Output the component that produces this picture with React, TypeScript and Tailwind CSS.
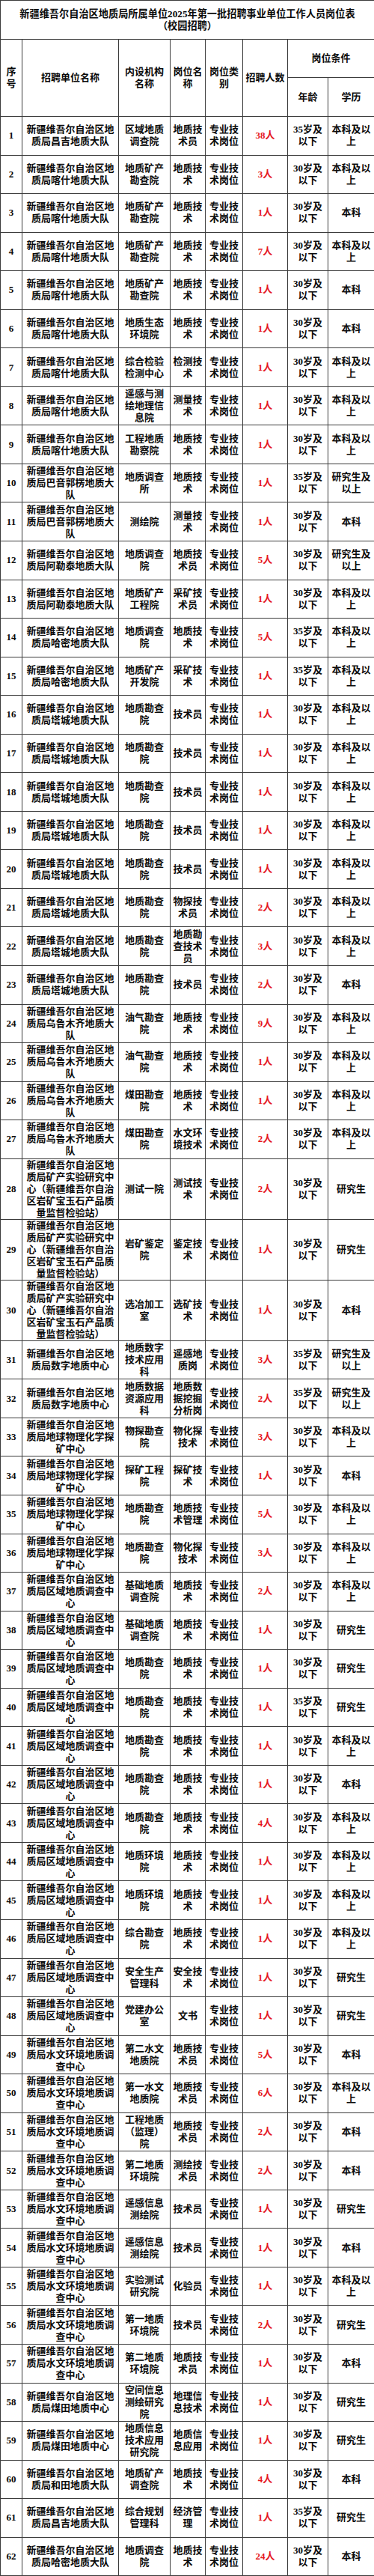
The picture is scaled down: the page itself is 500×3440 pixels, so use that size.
const A = "新疆维吾尔自治区地质局昌吉地质大队";
const B = "新疆维吾尔自治区地质局喀什地质大队";
const C = "新疆维吾尔自治区地质局巴音郭楞地质大队";
const D = "新疆维吾尔自治区地质局阿勒泰地质大队";
const E = "新疆维吾尔自治区地质局哈密地质大队";
const F = "新疆维吾尔自治区地质局塔城地质大队";
const G = "新疆维吾尔自治区地质局乌鲁木齐地质大队";
const H = "新疆维吾尔自治区地质局矿产实验研究中心（新疆维吾尔自治区岩矿宝玉石产品质量监督检验站）";
const I = "新疆维吾尔自治区地质局数字地质中心";
const J = "新疆维吾尔自治区地质局地球物理化学探矿中心";
const K = "新疆维吾尔自治区地质局区域地质调查中心";
const L = "新疆维吾尔自治区地质局水文环境地质调查中心";
const M = "新疆维吾尔自治区地质局煤田地质中心";
const N = "新疆维吾尔自治区地质局和田地质大队";

// unit, dept, post, count, age, education
const rows: [string, string, string, string, string, string][] = [
  [A, "区域地质调查院", "地质技术员", "38人", "35岁及以下", "本科及以上"],
  [B, "地质矿产勘查院", "地质技术", "3人", "30岁及以下", "本科及以上"],
  [B, "地质矿产勘查院", "地质技术", "1人", "30岁及以下", "本科"],
  [B, "地质矿产勘查院", "地质技术", "7人", "30岁及以下", "本科及以上"],
  [B, "地质矿产勘查院", "地质技术", "1人", "30岁及以下", "本科"],
  [B, "地质生态环境院", "地质技术", "1人", "30岁及以下", "本科"],
  [B, "综合检验检测中心", "检测技术", "1人", "30岁及以下", "本科及以上"],
  [B, "遥感与测绘地理信息院", "测量技术", "1人", "30岁及以下", "本科及以上"],
  [B, "工程地质勘察院", "地质技术", "1人", "30岁及以下", "本科及以上"],
  [C, "地质调查所", "地质技术", "1人", "35岁及以下", "研究生及以上"],
  [C, "测绘院", "测量技术", "1人", "30岁及以下", "本科"],
  [D, "地质调查院", "地质技术员", "5人", "30岁及以下", "研究生及以上"],
  [D, "地质矿产工程院", "采矿技术员", "1人", "30岁及以下", "本科及以上"],
  [E, "地质调查院", "地质技术", "5人", "35岁及以下", "本科及以上"],
  [E, "地质矿产开发院", "采矿技术", "1人", "35岁及以下", "本科及以上"],
  [F, "地质勘查院", "技术员", "1人", "30岁及以下", "本科及以上"],
  [F, "地质勘查院", "技术员", "1人", "30岁及以下", "本科及以上"],
  [F, "地质勘查院", "技术员", "1人", "30岁及以下", "本科及以上"],
  [F, "地质勘查院", "技术员", "1人", "30岁及以下", "本科及以上"],
  [F, "地质勘查院", "技术员", "1人", "30岁及以下", "本科及以上"],
  [F, "地质勘查院", "物探技术员", "2人", "30岁及以下", "本科及以上"],
  [F, "地质勘查院", "地质勘查技术员", "3人", "30岁及以下", "本科及以上"],
  [F, "地质勘查院", "技术员", "2人", "30岁及以下", "本科"],
  [G, "油气勘查院", "地质技术", "9人", "30岁及以下", "本科及以上"],
  [G, "油气勘查院", "地质技术", "1人", "30岁及以下", "本科及以上"],
  [G, "煤田勘查院", "地质技术", "1人", "30岁及以下", "本科及以上"],
  [G, "煤田勘查院", "水文环境技术", "2人", "30岁及以下", "本科及以上"],
  [H, "测试一院", "测试技术", "2人", "30岁及以下", "研究生"],
  [H, "岩矿鉴定院", "鉴定技术", "1人", "30岁及以下", "研究生"],
  [H, "选冶加工室", "选矿技术", "1人", "30岁及以下", "本科"],
  [I, "地质数字技术应用科", "遥感地质岗", "3人", "35岁及以下", "研究生及以上"],
  [I, "地质数据资源应用科", "地质数据挖掘分析岗", "2人", "35岁及以下", "研究生及以上"],
  [J, "物探勘查院", "物化探技术", "3人", "30岁及以下", "本科及以上"],
  [J, "探矿工程院", "探矿技术", "1人", "30岁及以下", "本科"],
  [J, "地质勘查院", "地质技术管理", "5人", "30岁及以下", "本科及以上"],
  [J, "地质勘查院", "物化探技术", "3人", "30岁及以下", "本科及以上"],
  [K, "基础地质调查院", "地质技术", "2人", "30岁及以下", "本科及以上"],
  [K, "基础地质调查院", "地质技术", "1人", "30岁及以下", "研究生"],
  [K, "地质勘查院", "地质技术", "1人", "30岁及以下", "研究生"],
  [K, "地质勘查院", "地质技术", "1人", "35岁及以下", "研究生"],
  [K, "地质勘查院", "地质技术", "1人", "30岁及以下", "本科及以上"],
  [K, "地质勘查院", "地质技术", "1人", "30岁及以下", "本科"],
  [K, "地质勘查院", "地质技术", "4人", "30岁及以下", "本科及以上"],
  [K, "地质环境院", "地质技术", "1人", "30岁及以下", "本科及以上"],
  [K, "地质环境院", "地质技术", "1人", "30岁及以下", "本科及以上"],
  [K, "综合勘查院", "地质技术", "1人", "30岁及以下", "本科及以上"],
  [K, "安全生产管理科", "安全技术", "1人", "30岁及以下", "研究生"],
  [K, "党建办公室", "文书", "1人", "30岁及以下", "研究生"],
  [L, "第二水文地质院", "地质技术员", "5人", "30岁及以下", "本科"],
  [L, "第一水文地质院", "地质技术员", "6人", "30岁及以下", "本科及以上"],
  [L, "工程地质（监理）院", "地质技术员", "2人", "30岁及以下", "本科"],
  [L, "第二地质环境院", "测绘技术员", "2人", "30岁及以下", "本科"],
  [L, "遥感信息测绘院", "技术员", "1人", "30岁及以下", "研究生"],
  [L, "遥感信息测绘院", "技术员", "1人", "30岁及以下", "本科"],
  [L, "实验测试研究院", "化验员", "1人", "30岁及以下", "本科及以上"],
  [L, "第一地质环境院", "技术员", "2人", "30岁及以下", "研究生"],
  [L, "第二地质环境院", "地质技术员", "1人", "30岁及以下", "本科"],
  [M, "空间信息测绘研究院", "地理信息技术", "1人", "30岁及以下", "研究生"],
  [M, "地质信息技术应用研究院", "地质信息应用", "1人", "30岁及以下", "研究生"],
  [N, "地质矿产调查院", "地质技术", "4人", "30岁及以下", "本科"],
  [A, "综合规划管理科", "经济管理", "1人", "35岁及以下", "研究生"],
  [E, "地质调查院", "地质技术", "24人", "30岁及以下", "本科"],
];

const cell = "border border-[#3c3c3c] text-center align-middle px-[2px] py-0";

export default function App() {
  return (
    <div className="w-[500px] bg-white text-[#0a0a0a] font-['Liberation_Serif','Noto_Sans_CJK_SC',serif] text-[13px] leading-[16px] font-bold">
      <table className="w-[500px] table-fixed border-collapse">
        <colgroup>
          <col className="w-[29px]" />
          <col className="w-[129px]" />
          <col className="w-[69px]" />
          <col className="w-[47px]" />
          <col className="w-[50px]" />
          <col className="w-[60px]" />
          <col className="w-[54px]" />
          <col className="w-[62px]" />
        </colgroup>
        <thead>
          <tr className="h-[52px]">
            <th colSpan={8} className={cell + " text-[13.2px] leading-[16px]"}>
              新疆维吾尔自治区地质局所属单位2025年第一批招聘事业单位工作人员岗位表
              <br />
              （校园招聘）
            </th>
          </tr>
          <tr className="h-[51px]">
            <th rowSpan={2} className={cell}>序号</th>
            <th rowSpan={2} className={cell}>招聘单位名称</th>
            <th rowSpan={2} className={cell + " px-[4px]"}>内设机构名称</th>
            <th rowSpan={2} className={cell}>岗位名称</th>
            <th rowSpan={2} className={cell}>岗位类别</th>
            <th rowSpan={2} className={cell}>招聘人数</th>
            <th colSpan={2} className={cell}>岗位条件</th>
          </tr>
          <tr className="h-[52px]">
            <th className={cell}>年龄</th>
            <th className={cell}>学历</th>
          </tr>
        </thead>
        <tbody>
          {rows.map((r, i) => (
            <tr key={i} className="h-[51.56px]">
              <td className={cell}>{i + 1}</td>
              <td className={cell + " px-[4px]"}>{r[0]}</td>
              <td className={cell + " px-[3px]"}>{r[1]}</td>
              <td className={cell}>{r[2]}</td>
              <td className={cell}>专业技术岗位</td>
              <td className={cell + " text-[#e5171f]"}>{r[3]}</td>
              <td className={cell + " px-[3px]"}>{r[4]}</td>
              <td className={cell}>{r[5]}</td>
            </tr>
          ))}
        </tbody>
      </table>
    </div>
  );
}
